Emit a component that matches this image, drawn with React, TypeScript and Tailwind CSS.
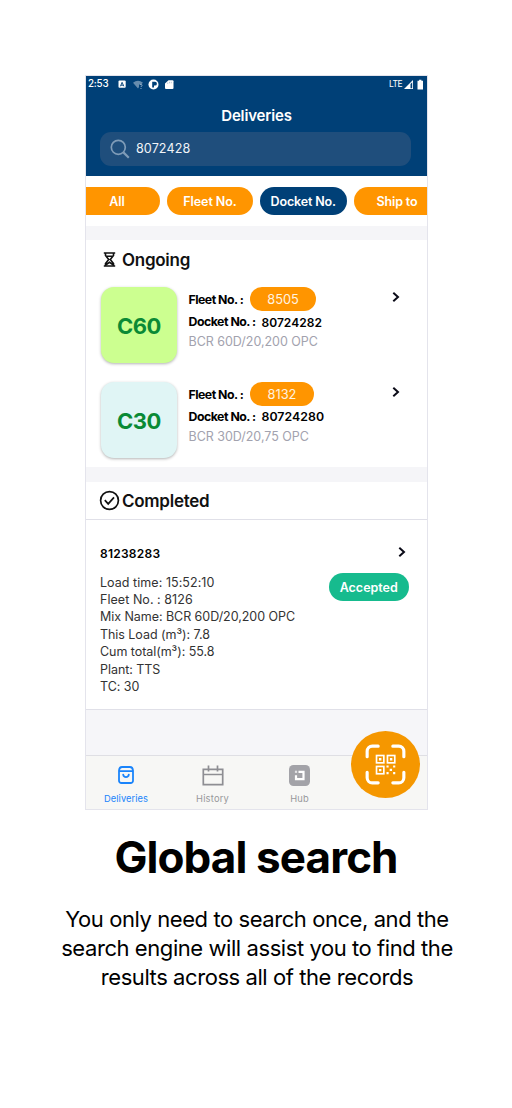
import type { ReactNode } from 'react';

function Chevron() {
  return (
    <svg width="8" height="12" viewBox="0 0 8 12" fill="none" stroke="#0b0b18" strokeWidth="2" className="block">
      <path d="M1.3 1.7 6 6 1.3 10.3" />
    </svg>
  );
}

function Pill({ className, children }: { className: string; children: ReactNode }) {
  return (
    <div className={`flex h-[28px] shrink-0 items-center justify-center whitespace-nowrap pt-[2px] text-[12.5px] font-semibold text-white ${className}`}>
      {children}
    </div>
  );
}

type OngoingProps = {
  code: string;
  tile: string;
  fleet: string;
  badge: string;
  docket: string;
  docketClass: string;
  mix: string;
};

function OngoingRow({ code, tile, fleet, badge, docket, docketClass, mix }: OngoingProps) {
  return (
    <div className="flex h-[95px] pl-[15px]">
      <div
        className={`flex h-[76px] w-[76px] shrink-0 items-center justify-center rounded-[13px] pt-[3px] text-[22px] font-bold tracking-[-0.5px] text-[#0a8a35] shadow-[0_1px_3px_rgba(0,0,0,0.3)] ${tile}`}
      >
        {code}
      </div>
      <div className="ml-[11.5px] flex-1 whitespace-nowrap text-[12.3px] text-black">
        <div className="flex h-[24px] items-center">
          <span className="w-[61.5px] pt-[3px] font-bold tracking-[-0.5px]">Fleet No. :</span>
          <span className={`flex h-[24px] items-center justify-center rounded-full bg-[#ff9500] pt-[2px] text-[12.8px] text-[#fff3e0] ${badge}`}>
            {fleet}
          </span>
        </div>
        <div className="flex h-[21px] items-center pt-[2px]">
          <span className="w-[73px] font-bold tracking-[-0.48px]">Docket No. :</span>
          <span className={docketClass}>{docket}</span>
        </div>
        <div className="flex h-[20px] items-center pt-px text-[12.5px] tracking-[-0.03px] text-[#a2a2ae]">{mix}</div>
      </div>
      <div className="w-[35px] pt-[3.5px]">
        <Chevron />
      </div>
    </div>
  );
}

function StatusBar() {
  return (
    <div className="flex h-[17px] items-center pl-[2px] pr-[3px] text-[9.8px] font-medium text-white">
      <span className="w-[29.5px] tracking-[-0.2px]">2:53</span>
      <svg width="56" height="12" viewBox="0 0 56 12" fill="#fff">
        <rect x="0.5" y="1.5" width="7.2" height="7.2" rx="1" />
        <path d="M2.4 7.3 4.100 3.3l1.700 4M3 6.200h2.200" stroke="#004077" strokeWidth="0.9" fill="none" />
        <path d="M15 3.700Q20 0 25 3.700L23 5.500h-2V8L20 9.500z" opacity=".4" />
        <path d="M22 6c.3-1 2.300-.8 2 .4-.1.700-1 .8-1 1.600M23 9v1" stroke="#b7c9da" strokeWidth=".8" fill="none" />
        <circle cx="35.500" cy="5.500" r="5" />
        <path d="M34.200 8.500V2.800h2.800a1.900 1.900 0 0 1 0 3.800h-1v1.900z" fill="#004077" />
        <path d="M50.500 1.200h4a1 1 0 0 1 1 1V9a1 1 0 0 1-1 1H48a1 1 0 0 1-1-1V4.500z" />
        <path d="M49.700 3.500V5M51.500 2.800v1.500M53.300 2.800v1.500" stroke="#9fb5ca" strokeWidth=".7" />
      </svg>
      <span className="ml-auto mr-[2px] text-[8.500px] font-normal tracking-[-0.500px]">LTE</span>
      <svg width="20" height="12" viewBox="0 0 20 12">
        <path d="M0 10 9 1v9z" fill="#fff" />
        <path d="M6.500 5v4.300h1.700V3.200z" fill="#004077" />
        <path d="M13.500 1.700h1.600V.7h2.300v1H19v8.700h-5.500z" fill="#fff" />
      </svg>
    </div>
  );
}

function QrButton() {
  return (
    <div className="absolute left-[265px] top-[655px] flex h-[67px] w-[69px] items-center justify-center rounded-[50%] bg-[#f59700]">
      <svg width="41" height="41" viewBox="0 0 42 42" fill="none" stroke="#fff">
        <g strokeWidth="3.200">
          <path strokeLinecap="round" d="M2.200 13V7.500a5.300 5.300 0 0 1 5.300-5.300h6M28.500 2.200h6a5.300 5.300 0 0 1 5.300 5.300V13M39.800 29v5.500a5.300 5.300 0 0 1-5.300 5.300h-6M13.500 39.800h-6a5.300 5.300 0 0 1-5.300-5.300V29" />
        </g>
        <g strokeWidth="1.700">
          <rect x="11.800" y="11.800" width="7.500" height="7.500" />
          <rect x="23" y="11.800" width="7.500" height="7.500" />
          <rect x="11.800" y="23" width="7.500" height="7.500" />
        </g>
        <g fill="#fff" stroke="none">
          <path d="M14.300 14.300h2.500v2.500h-2.500zM25.500 14.300H28v2.500h-2.500zM14.300 25.500h2.500V28h-2.500zM22 22h2.200v2.200H22zM28.800 22H31v2.200h-2.200zM25.300 25.300h2.400v2.400h-2.400zM22 28.800h2.200V31H22zM28.800 28.800H31V31h-2.200z" />
        </g>
      </svg>
    </div>
  );
}

function TabBar() {
  return (
    <div className="flex h-[54px] border-t border-[#dfdfe4] bg-[#f7f7f5] text-[9.300px] text-[#97979b]">
      <div className="flex w-[80px] flex-col items-center text-[#1a84fb]">
        <svg className="mt-[10px]" width="16" height="18" viewBox="0 0 16 18" fill="none" stroke="currentColor" strokeWidth="1.800" strokeLinejoin="round" strokeLinecap="round">
          <path d="M1 4.500C1.200 2.200 2.300 1 4 1h8c1.700 0 2.800 1.200 3 3.500v10.200a2.300 2.300 0 0 1-2.300 2.300H3.300A2.300 2.300 0 0 1 1 14.700zM1.200 5.200h13.600M5.200 8.700c.5 3.200 5.100 3.200 5.600 0" />
        </svg>
        <span className="mt-[8px] leading-[14px] tracking-[0.050px]">Deliveries</span>
      </div>
      <div className="flex w-[93px] flex-col items-center">
        <svg className="mt-[9px]" width="22" height="21" viewBox="0 0 22 21" fill="none" stroke="#8e8e93" strokeWidth="1.700">
          <path d="M1.300 4.300h19.400v15.400H1.300zM1.300 9.500h19.400M6.500.5v6M15.500.5v6" />
        </svg>
        <span className="mt-[6px] leading-[14px] tracking-[0.200px]">History</span>
      </div>
      <div className="flex w-[81px] flex-col items-center">
        <svg className="mt-[9px]" width="21" height="21" viewBox="0 0 21 21" fill="none">
          <rect width="21" height="21" rx="4.500" fill="#a3a3a8" />
          <path d="M9.500 6.800h5v7.400H7V10.200" stroke="#fff" strokeWidth="2.200" />
          <path d="M5.900 5.700h2.200v2.200H5.900z" fill="#e2e2e5" />
        </svg>
        <span className="mt-[6px] leading-[14px] tracking-[0.200px]">Hub</span>
      </div>
    </div>
  );
}

export default function App() {
  return (
    <div className="h-[1108px] w-[512px] overflow-hidden bg-white pt-[75px] font-['Inter',sans-serif]">
      <div className="relative ml-[85px] h-[735px] w-[343px] overflow-hidden border border-[#e4e4ec] bg-white">
        <header className="h-[100px] bg-[#004077]">
          <StatusBar />
          <h1 className="mt-[13px] h-[20px] text-center text-[15px] font-semibold leading-[20px] tracking-[-0.150px] text-white">Deliveries</h1>
          <div className="ml-[14px] mt-[6px] flex h-[34px] w-[311px] items-center rounded-[11px] bg-[#1f4e7c] pl-[10px] text-[12.600px] text-[#f1f4f8]">
            <svg width="20" height="20" viewBox="0 0 20 20" fill="none" stroke="#7f9cb8" strokeWidth="1.700">
              <circle cx="8.300" cy="8.300" r="7" />
              <path d="m13.400 13.400 5.400 5.400" strokeWidth="2.200" />
            </svg>
            <span className="ml-[6px] pt-px tracking-[0.080px]">8072428</span>
          </div>
        </header>
        <div className="flex h-[50px] gap-[7px] overflow-hidden pt-[11px]">
          <Pill className="w-[74px] rounded-r-full bg-[#ff9500] pr-[12px]">All</Pill>
          <Pill className="w-[86px] rounded-full bg-[#ff9500] tracking-[-0.060px]">Fleet No.</Pill>
          <Pill className="w-[86.500px] rounded-full bg-[#004077] tracking-[-0.150px]">Docket No.</Pill>
          <Pill className="w-[87px] rounded-full bg-[#ff9500] tracking-[-0.150px]">Ship to</Pill>
        </div>
        <div className="h-[14px] bg-[#f5f5f8]" />
        <section className="h-[227px]">
          <h2 className="flex h-[47px] items-center pb-[7px] pl-[17px] text-[17px] font-semibold text-[#111]">
            <svg width="13" height="15" viewBox="0 0 13 15" fill="none" stroke="#111" strokeWidth="1.600" className="mb-[2px]">
              <path d="M.8 1h11.400M.8 14h11.400M2.500 1v2.500l3.200 4-3.200 4V14M10.500 1v2.500l-3.200 4 3.200 4V14M3.300 4.300h6.400M3.300 12.500l3.200-2.200 3.200 2.200" />
            </svg>
            <span className="ml-[6px] pt-px tracking-[-0.270px]">Ongoing</span>
          </h2>
          <OngoingRow code="C60" tile="bg-[#ccff90]" fleet="8505" badge="w-[66px]" docket="80724282" docketClass="text-[12px] font-semibold tracking-[0.030px]" mix="BCR 60D/20,200 OPC" />
          <OngoingRow code="C30" tile="bg-[#e0f5f5]" fleet="8132" badge="w-[64px]" docket="80724280" docketClass="text-[12.300px] font-semibold tracking-[0.060px]" mix="BCR 30D/20,75 OPC" />
        </section>
        <div className="h-[15px] bg-[#f5f5f8]" />
        <h2 className="flex h-[38px] items-center border-b border-[#e0e0e8] pl-[13px] text-[17px] font-semibold text-[#111]">
          <svg width="21" height="21" viewBox="0 0 21 21" fill="none" stroke="#111" strokeWidth="1.700">
            <circle cx="10.500" cy="10.500" r="8.900" />
            <path d="m5.800 10.200 3.400 3.700 5.800-6.500" />
          </svg>
          <span className="ml-[2px] pt-[2px] tracking-[-0.270px]">Completed</span>
        </h2>
        <section className="flex h-[190px] justify-between border-b border-[#e0e0e8] pl-[14px]">
          <div className="whitespace-nowrap pt-[25px]">
            <div className="h-[28.500px] text-[12px] font-semibold leading-[18px] tracking-[0.250px]">81238283</div>
            <div className="text-[12.500px] leading-[17.400px] tracking-[-0.050px] text-[#333]">
              <div className="tracking-[0.050px]">Load time: 15:52:10</div>
              <div className="tracking-[0.050px]">Fleet No. : 8126</div>
              <div>Mix Name: BCR 60D/20,200 OPC</div>
              <div>This Load (m³): 7.8</div>
              <div>Cum total(m³): 55.8</div>
              <div>Plant: TTS</div>
              <div>TC: 30</div>
            </div>
          </div>
          <div className="flex w-[98px] flex-col pt-[26px]">
            <div className="ml-[69px] h-[27px]">
              <Chevron />
            </div>
            <Pill className="w-[79.500px] rounded-full bg-[#16bb8e]">Accepted</Pill>
          </div>
        </section>
        <div className="h-[45px] bg-[#f6f6f9]" />
        <TabBar />
        <QrButton />
      </div>
      <h2 className="mt-[19px] h-[56px] text-center text-[44px] font-bold leading-[56px] tracking-[-0.900px] text-black">Global search</h2>
      <p className="ml-[2px] mt-[20px] whitespace-nowrap text-center text-[22px] leading-[29px] tracking-[-0.430px] text-black">
        You only need to search once, and the
        <br />
        search engine will assist you to find the
        <br />
        results across all of the records
      </p>
    </div>
  );
}
